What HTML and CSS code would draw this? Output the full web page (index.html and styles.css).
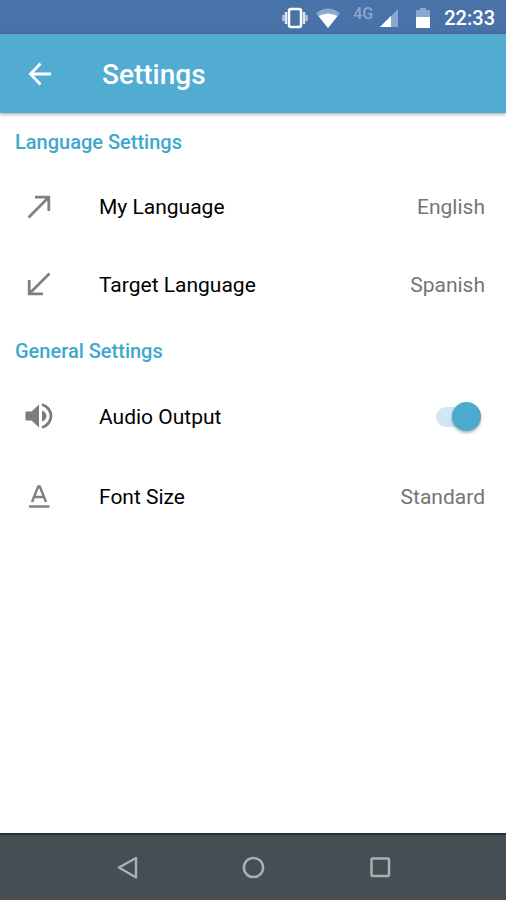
FILE: index.html
```
<!DOCTYPE html>
<html lang="en">
<head>
    <meta charset="UTF-8">
    <meta name="viewport" content="width=device-width, initial-scale=1.0">
    <title>Settings</title>
    <link rel="stylesheet" href="styles.css">
</head>
<body>
    <div class="status-bar">
        <svg class="status-vibrate" width="26" height="22" viewBox="0 0 26 22" aria-hidden="true">
            <rect x="7" y="2" width="12" height="18" rx="2" fill="none" stroke="#fff" stroke-width="2.500"/>
            <path d="M4 5v12M22 5v12" stroke="#dfe6f1" stroke-width="2.500"/>
            <path d="M1.500 8v6M24.500 8v6" stroke="#b9c8e0" stroke-width="2.500"/>
        </svg>
        <svg class="status-wifi" width="24" height="20" viewBox="0 0 24 20" aria-hidden="true">
            <path d="M0 5Q12-4 24 5L12 20z" fill="#8ba7cf"/>
            <path d="M2.500 8Q12 3 21.500 8L12 20z" fill="#fff"/>
        </svg>
        <span class="network">4G</span>
        <svg class="status-signal" width="18" height="18" viewBox="0 0 18 18" aria-hidden="true">
            <path d="M18 0v18H0z" fill="#8ba7cf"/>
            <path d="M11 7v11H0z" fill="#fff"/>
        </svg>
        <svg class="status-battery" width="14" height="20" viewBox="0 0 14 20" aria-hidden="true">
            <path d="M4 0h6v2h4v8H0V2h4z" fill="#8ba7cf"/>
            <path d="M0 9h14v11H0z" fill="#fff"/>
        </svg>
        <time class="clock">22:33</time>
    </div>

    <header class="app-bar">
        <button class="back" type="button" aria-label="Back">
            <svg width="24" height="24" viewBox="0 0 24 24">
                <path d="M23 12H3M12.500 1.500L2.500 12L12.500 22.500" fill="none" stroke="#fff" stroke-width="2.800"/>
            </svg>
        </button>
        <h1>Settings</h1>
    </header>

    <main class="content">
        <section class="language">
            <h2>Language Settings</h2>
            <button class="row" type="button">
                <svg class="row-icon" width="30" height="30" viewBox="0 0 30 30" aria-hidden="true">
                    <path d="M4.500 25.500L24.500 5.500M11 5.200h13.800v13.800" fill="none" stroke="#808080" stroke-width="2.800"/>
                </svg>
                <span class="label">My Language</span>
                <span class="value">English</span>
            </button>
            <button class="row" type="button">
                <svg class="row-icon" width="30" height="30" viewBox="0 0 30 30" aria-hidden="true">
                    <path d="M25.500 3.500L5.500 23.500M5.200 10v13.800h13.800" fill="none" stroke="#808080" stroke-width="2.800"/>
                </svg>
                <span class="label">Target Language</span>
                <span class="value">Spanish</span>
            </button>
        </section>

        <section class="general">
            <h2>General Settings</h2>
            <div class="row">
                <svg class="row-icon" width="30" height="30" viewBox="0 0 30 30" aria-hidden="true">
                    <path d="M1.500 9.500h6L15 2.500v23L7.500 18.500h-6z" fill="#7c7c7c"/>
                    <path d="M18 8.500q4.500 2 4.500 5.500t-4.500 5.500z" fill="#7c7c7c"/>
                    <path d="M18 2.500c5 1.500 9 6 9 11.500s-4 10-9 11.500" fill="none" stroke="#7c7c7c" stroke-width="2.800"/>
                </svg>
                <label class="label" for="audio">Audio Output</label>
                <input class="switch" id="audio" type="checkbox" role="switch" checked>
            </div>
            <button class="row" type="button">
                <svg class="row-icon" width="30" height="30" viewBox="0 0 30 30" aria-hidden="true">
                    <path d="M8 20L14.200 4.500h1.600L22 20M10.300 15h9.400" fill="none" stroke="#808080" stroke-width="2.400"/>
                    <path d="M5 24.500h20.500" stroke="#808080" stroke-width="2.500"/>
                </svg>
                <span class="label">Font Size</span>
                <span class="value">Standard</span>
            </button>
        </section>
    </main>

    <nav class="nav-bar">
        <button type="button" aria-label="Back">
            <svg width="24" height="24" viewBox="0 0 24 24">
                <path d="M21 2v19.500L4 11.500z" fill="none" stroke="#a9afb2" stroke-width="2.400" stroke-linejoin="round"/>
            </svg>
        </button>
        <button type="button" aria-label="Home">
            <svg width="24" height="24" viewBox="0 0 24 24">
                <circle cx="12.500" cy="11.500" r="9.600" fill="none" stroke="#a9afb2" stroke-width="2.500"/>
            </svg>
        </button>
        <button type="button" aria-label="Recent apps">
            <svg width="24" height="24" viewBox="0 0 24 24">
                <rect x="3.500" y="2.500" width="17.500" height="17.500" rx="1" fill="none" stroke="#a9afb2" stroke-width="2.500"/>
            </svg>
        </button>
    </nav>
</body>
</html>
```
FILE: styles.css
```
:root {
    --status-color: #4872a8;
    --primary-color: #52acd2;
    --heading-color: #3ea8cd;
    --nav-color: #464e53;
}

* {
    margin: 0;
    padding: 0;
    box-sizing: border-box;
}

body {
    min-height: 100vh;
    display: flex;
    flex-direction: column;
    background: white;
    color: black;
    font-family: Roboto, sans-serif;
}

button {
    border: none;
    background: none;
    font: inherit;
    color: inherit;
    text-align: left;
}

svg {
    display: block;
    flex: none;
}

.status-bar {
    height: 34px;
    padding: 2px 11px 0 0;
    display: flex;
    justify-content: flex-end;
    align-items: center;
    background: var(--status-color);
    color: white;
}

.status-wifi {
    margin-left: 8px;
}

.network {
    margin: 0 7px 0 13px;
    align-self: flex-start;
    font-size: 16px;
    font-weight: 500;
    line-height: 24px;
    color: #8ba7cf;
}

.status-battery {
    margin: 0 14px 0 18px;
}

.clock {
    font-size: 20px;
    font-weight: 500;
}

.app-bar {
    height: 79px;
    padding: 0 28px;
    display: flex;
    align-items: center;
    gap: 50px;
    background: var(--primary-color);
    color: white;
    box-shadow: 0 1px 4px rgba(0, 0, 0, 0.4);
}

.app-bar h1 {
    padding-top: 2px;
    font-size: 28px;
    font-weight: 500;
}

.content {
    flex: 1;
    padding-top: 2px;
}

h2 {
    height: 53px;
    padding: 0 15px;
    display: flex;
    align-items: center;
    font-size: 20px;
    font-weight: 500;
    color: var(--heading-color);
}

.row {
    width: 100%;
    height: 78px;
    padding: 0 21px 0 24px;
    display: flex;
    align-items: center;
    font-size: 21px;
}

.general .row {
    height: 80px;
}

.label {
    flex: 1;
    margin-left: 45px;
}

.value {
    color: #757575;
}

.switch {
    appearance: none;
    position: relative;
    width: 46px;
    height: 30px;
    margin-right: 4px;
}

.switch::before {
    content: "";
    position: absolute;
    inset: 5px 8px 5px 1px;
    border-radius: 10px;
    background: #cfe8f3;
}

.switch::after {
    content: "";
    position: absolute;
    top: 0;
    left: 0;
    width: 29px;
    height: 29px;
    border-radius: 50%;
    background: #999;
    box-shadow: 0 2px 3px rgba(0, 0, 0, 0.3);
}

.switch:checked::after {
    left: auto;
    right: 0;
    background: #4caacf;
}

.nav-bar {
    height: 67px;
    padding: 0 12.5%;
    display: grid;
    grid-template-columns: repeat(3, 1fr);
    place-items: center;
    background: var(--nav-color);
    border-top: 2px solid #1c3533;
}
```
